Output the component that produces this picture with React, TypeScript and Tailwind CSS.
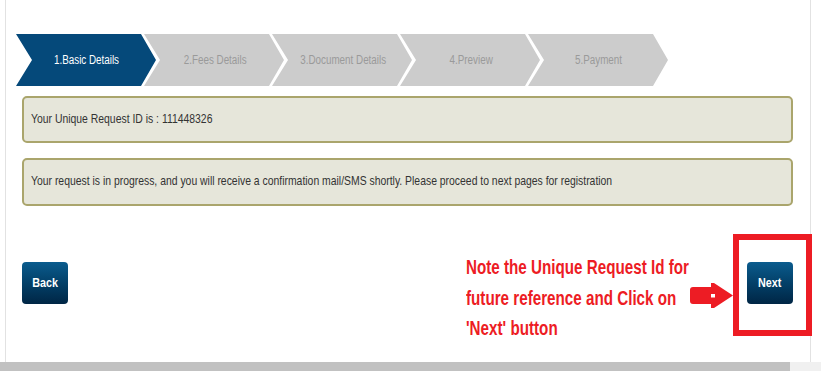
import React from "react";

const sans = {
  fontFamily: '"Liberation Sans", Arial, sans-serif',
};

const steps = ["1.Basic Details", "2.Fees Details", "3.Document Details", "4.Preview", "5.Payment"];

function Step({ label, active, first }: { label: string; active: boolean; first: boolean }) {
  return (
    <div
      className={`w-[140px] h-[52px] flex items-center justify-center text-[12px] [clip-path:polygon(0_0,calc(100%-15px)_0,100%_50%,calc(100%-15px)_100%,0_100%,16px_50%)] ${
        active ? "bg-[#05497a] text-white" : "bg-[#cccccc] text-[#9a9a9a]"
      } ${first ? "" : "-ml-[12px]"}`}
      style={sans}
    >
      <span className="inline-block whitespace-nowrap scale-x-[0.82] origin-center pl-[2px]">{label}</span>
    </div>
  );
}

function NavButton({ label }: { label: string }) {
  return (
    <button
      className="h-[42px] w-[46px] rounded-[4px] bg-gradient-to-b from-[#0b5c8e] to-[#002645] text-white text-[13.5px] flex items-center justify-center"
      style={sans}
    >
      <span className="inline-block scale-x-[0.8] origin-center font-bold">{label}</span>
    </button>
  );
}

export default function App() {
  return (
    <div className="w-[821px] h-[371px] overflow-hidden bg-white flex flex-col relative">
      <div className="h-[362px] flex">
        <div className="ml-[5px] w-[806px] border-x border-[#e2e2e2] flex flex-col">
          <div className="pt-[34px] pl-[10px] flex">
            {steps.map((s, i) => (
              <Step key={s} label={s} active={i === 0} first={i === 0} />
            ))}
          </div>
          <div className="pl-[16px] pr-[17px] flex flex-col">
            <div
              className="mt-[10px] h-[47px] rounded-[5px] border-2 border-[#aaa56c] bg-[#e6e6da] flex items-center pl-[7px] text-[12.7px] text-[#333333]"
              style={sans}
            >
              <span className="inline-block whitespace-nowrap scale-x-[0.82] origin-left">
                Your Unique Request ID is : 111448326
              </span>
            </div>
            <div
              className="mt-[15px] h-[48px] rounded-[5px] border-2 border-[#aaa56c] bg-[#e6e6da] flex items-center pl-[7px] text-[12.7px] text-[#333333]"
              style={sans}
            >
              <span className="inline-block whitespace-nowrap scale-x-[0.82] origin-left">
                Your request is in progress, and you will receive a confirmation mail/SMS shortly. Please proceed to next pages for registration
              </span>
            </div>
            <div className="mt-[56px] flex justify-between">
              <NavButton label="Back" />
              <NavButton label="Next" />
            </div>
          </div>
        </div>
      </div>
      <div className="h-[9px] flex">
        <div className="w-[790px] bg-[#c1c1c1]" />
        <div className="flex-1 bg-[#f0f0f0]" />
      </div>

      {/* annotation overlay */}
      <div className="absolute left-[733px] top-[234px] w-[79px] h-[102px] border-[6px] border-[#ed1c24]" />
      <div
        className="absolute left-[466px] top-[252px] text-[#ed1c24] font-bold text-[20px] leading-[30.5px] whitespace-nowrap"
        style={sans}
      >
        <div className="scale-x-[0.76] origin-left">Note the Unique Request Id for</div>
        <div className="scale-x-[0.76] origin-left">future reference and Click on</div>
        <div className="scale-x-[0.76] origin-left">'Next' button</div>
      </div>
      <svg className="absolute left-[689px] top-[282px]" width="46" height="27" viewBox="0 0 46 27">
        <path
          d="M4 5 H22 V1 H25 L44 13.5 L25 26 H22 V22 H4 Q1 22 1 19 V8 Q1 5 4 5 Z"
          fill="#ed1c24"
        />
        <rect x="22" y="12" width="4" height="3.5" fill="#ffffff" />
      </svg>
    </div>
  );
}
